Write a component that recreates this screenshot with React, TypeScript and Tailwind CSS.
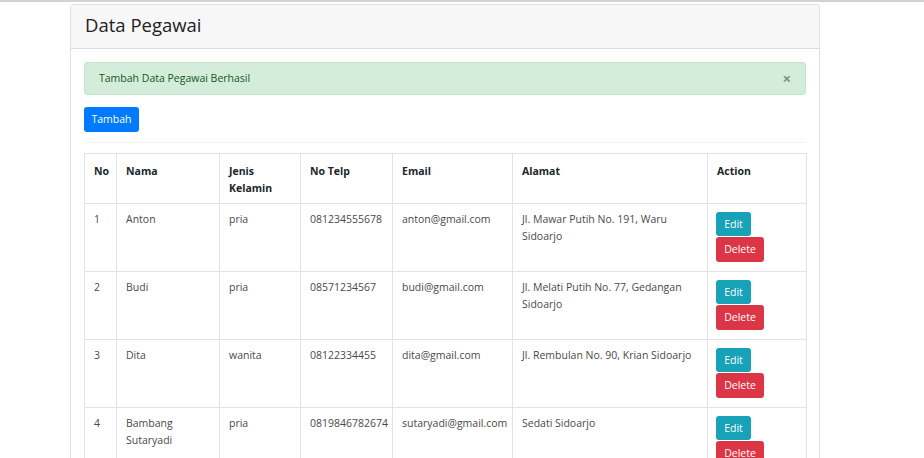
import React from "react";

const rows = [
  { no: "1", nama: "Anton", jk: "pria", telp: "081234555678", email: "anton@gmail.com", alamat: "Jl. Mawar Putih No. 191, Waru Sidoarjo" },
  { no: "2", nama: "Budi", jk: "pria", telp: "08571234567", email: "budi@gmail.com", alamat: "Jl. Melati Putih No. 77, Gedangan Sidoarjo" },
  { no: "3", nama: "Dita", jk: "wanita", telp: "08122334455", email: "dita@gmail.com", alamat: "Jl. Rembulan No. 90, Krian Sidoarjo" },
  { no: "4", nama: "Bambang Sutaryadi", jk: "pria", telp: "0819846782674", email: "sutaryadi@gmail.com", alamat: "Sedati Sidoarjo" },
];

const widths = ["w-[32px]", "w-[103px]", "w-[81px]", "w-[92px]", "w-[120px]", "w-[195px]", "w-[99px]"];

export default function App() {
  return (
    <div className="min-h-[458px] bg-white font-['Open_Sans','Noto_Sans',sans-serif] text-[#212529]">
      <div className="h-[2px] bg-[#d2d2d2]" />
      <div className="pt-[2px] pl-[70px]">
        <div className="w-[750px] border border-[#dfdfdf] rounded-t-[3px] h-[470px]">
          <div className="h-[44px] bg-[#f7f7f7] border-b border-[#dcdcdc] flex items-center pl-[14px] pb-[2px]">
            <h3 className="text-[18.5px] leading-none text-[#222]">Data Pegawai</h3>
          </div>
          <div className="px-[13px] pt-[13px]">
            <div className="h-[33px] bg-[#d4edda] border border-[#c3e6cb] rounded-[3px] flex items-center justify-between pl-[14px] pr-[14px] text-[10.5px] text-[#155724]">
              <span>Tambah Data Pegawai Berhasil</span>
              <span className="text-[15px] leading-none text-[#7a9580] font-bold">×</span>
            </div>
            <div className="mt-[12px]">
              <button className="h-[25px] w-[55px] bg-[#007bff] text-white text-[10.5px] rounded-[3px] flex items-center justify-center">Tambah</button>
            </div>
            <div className="mt-[10px] h-px bg-[#f3f3f3]" />
            <table className="mt-[10px] border-collapse table-fixed w-[722px] text-[10.5px] leading-[17px]">
              <thead>
                <tr className="h-[49px]">
                  {["No", "Nama", "Jenis Kelamin", "No Telp", "Email", "Alamat", "Action"].map((h, i) => (
                    <th key={h} className={`${widths[i]} border border-[#e3e3e3] align-top text-left font-bold px-[9px] pt-[9px] pb-[6px] text-[#212529]`}>
                      {h}
                    </th>
                  ))}
                </tr>
              </thead>
              <tbody>
                {rows.map((r) => (
                  <tr key={r.no} className="h-[68px]">
                    {[r.no, r.nama, r.jk, r.telp, r.email, r.alamat].map((c, i) => (
                      <td key={i} className="border border-[#e3e3e3] align-top px-[9px] pt-[7px] text-[#4a4a4a]">
                        {c}
                      </td>
                    ))}
                    <td className="border border-[#e3e3e3] align-top px-[8px] pt-[8px]">
                      <div className="flex flex-col items-start gap-[1px]">
                        <button className="h-[24px] w-[35px] bg-[#17a2b8] text-white text-[10.5px] rounded-[3px]">Edit</button>
                        <button className="h-[25px] w-[48px] bg-[#dc3545] text-white text-[10.5px] rounded-[3px]">Delete</button>
                      </div>
                    </td>
                  </tr>
                ))}
              </tbody>
            </table>
          </div>
        </div>
      </div>
    </div>
  );
}
